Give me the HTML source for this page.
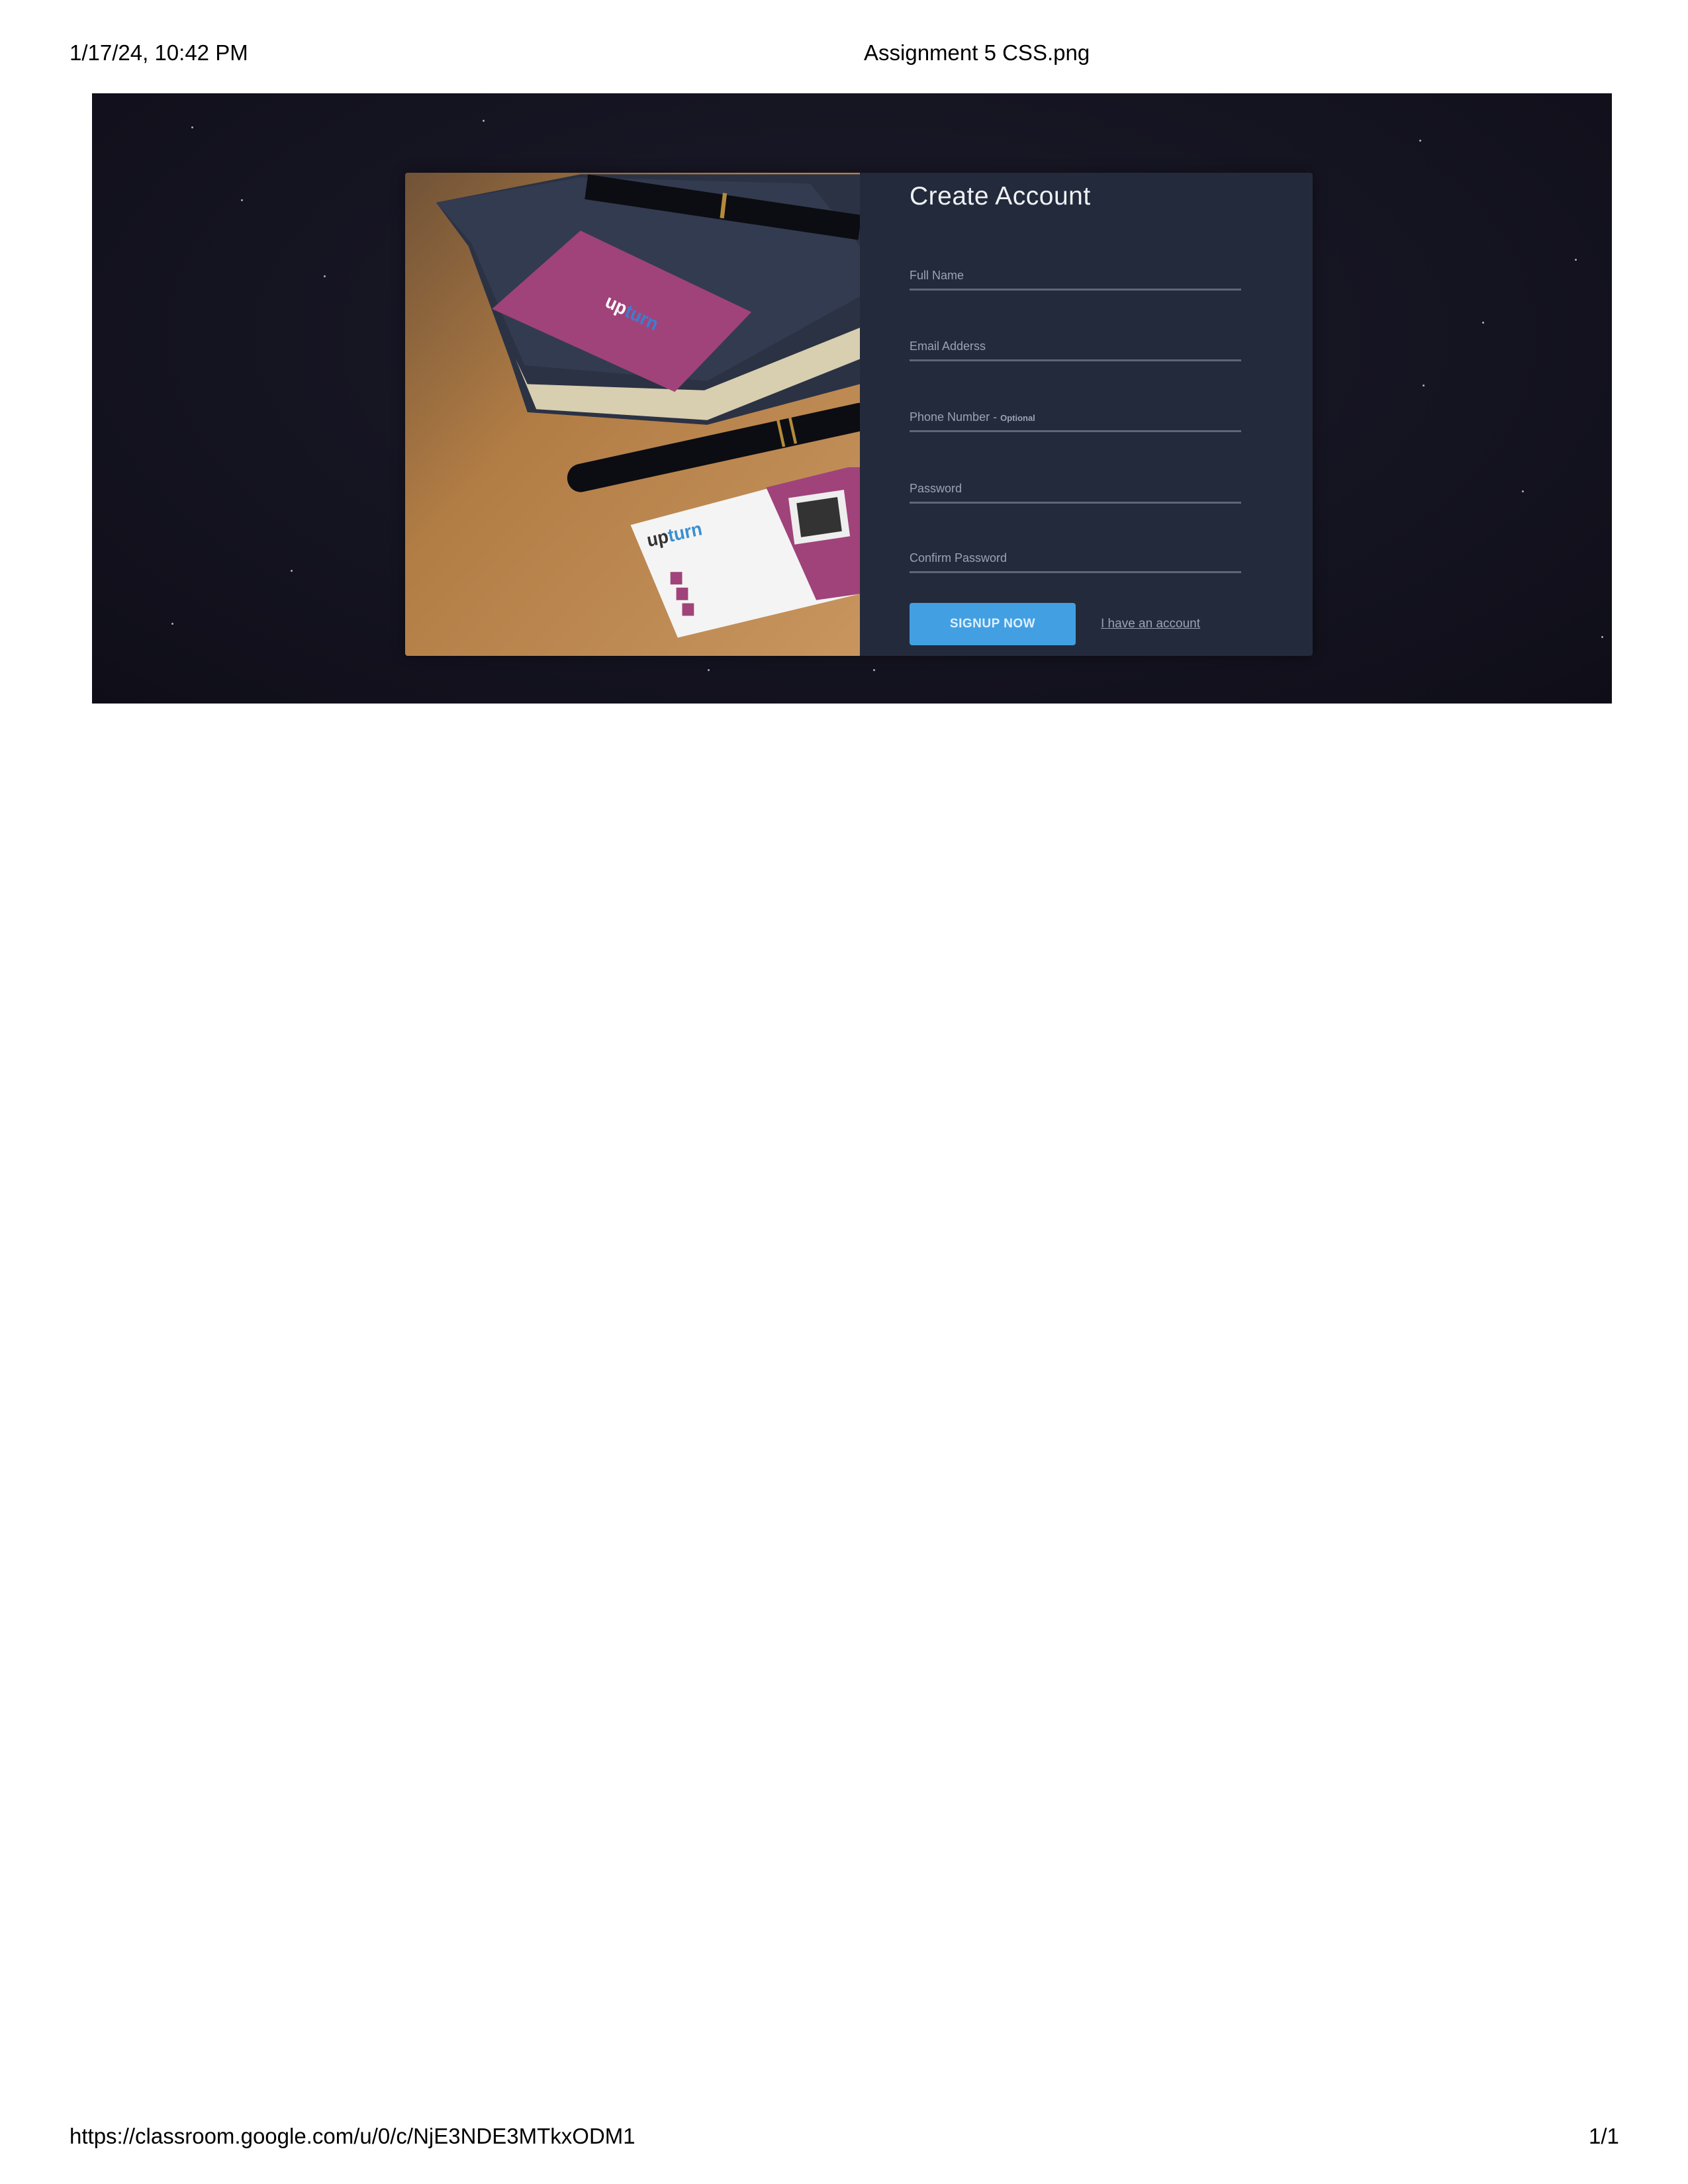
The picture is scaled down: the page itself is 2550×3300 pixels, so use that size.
<!DOCTYPE html>
<html><head><meta charset="utf-8"><style>
html,body{margin:0;padding:0;background:#fff;}
body{width:2550px;height:3300px;position:relative;overflow:hidden;font-family:"Liberation Sans",Arial,sans-serif;}
.t{position:absolute;font-size:33px;color:#000;white-space:nowrap;line-height:1;}
#bg{position:absolute;left:139px;top:141px;width:2296px;height:922px;background:radial-gradient(ellipse at 50% 40%,#1c1b2a 0%,#141320 60%,#0f0e18 100%);overflow:hidden;}
.star{position:absolute;width:3px;height:3px;border-radius:50%;background:#cfd3ff;opacity:.8}
#card{position:absolute;left:612px;top:261px;width:1371px;height:730px;border-radius:4px;overflow:hidden;background:#232a3b;box-shadow:0 0 20px rgba(0,0,0,.4);}
#img{position:absolute;left:0;top:0;width:687px;height:730px;}
.h{position:absolute;left:762px;top:14px;font-size:39px;color:#eef0f4;letter-spacing:0.5px;}
.lab{position:absolute;left:762px;font-size:18px;color:#9aa3b3;}
.lab small{font-size:13px;font-weight:bold}
.ln{position:absolute;left:762px;width:501px;height:3px;background:#5f6677;}
.btn{position:absolute;left:762px;top:650px;width:251px;height:64px;background:#42a0e2;border-radius:4px;color:#dfefff;font-weight:bold;font-size:19px;text-align:center;line-height:64px;letter-spacing:0.5px;}
.lnk{position:absolute;left:1051px;top:671px;font-size:19px;color:#9aa3b3;text-decoration:underline;}
</style></head><body>
<div class="t" style="left:105px;top:63px">1/17/24, 10:42 PM</div>
<div class="t" style="left:1305px;top:63px">Assignment 5 CSS.png</div>
<div id="bg">
<div class="star" style="left:150px;top:50px"></div>
<div class="star" style="left:225px;top:160px"></div>
<div class="star" style="left:350px;top:275px"></div>
<div class="star" style="left:590px;top:40px"></div>
<div class="star" style="left:835px;top:120px"></div>
<div class="star" style="left:2005px;top:70px"></div>
<div class="star" style="left:2100px;top:345px"></div>
<div class="star" style="left:2240px;top:250px"></div>
<div class="star" style="left:2160px;top:600px"></div>
<div class="star" style="left:2010px;top:440px"></div>
<div class="star" style="left:300px;top:720px"></div>
<div class="star" style="left:1180px;top:870px"></div>
<div class="star" style="left:930px;top:870px"></div>
<div class="star" style="left:120px;top:800px"></div>
<div class="star" style="left:2280px;top:820px"></div>
</div>
<div id="card">
<svg id="img" viewBox="25 25 1543 1543" preserveAspectRatio="none" xmlns="http://www.w3.org/2000/svg">
<defs><linearGradient id="w" x1="0" y1="0" x2="1" y2="1"><stop offset="0" stop-color="#6e5136"/><stop offset=".4" stop-color="#b27d45"/><stop offset="1" stop-color="#c99660"/></linearGradient></defs>
<rect x="0" y="0" width="1600" height="1600" fill="url(#w)"/>
<polygon points="130,120 620,30 1568,30 1568,700 1050,830 440,790 380,620 240,260" fill="#2b3244"/>
<polygon points="400,620 470,780 1050,815 1568,620 1568,520 1040,720 440,700" fill="#d8ceb0"/>
<polygon points="130,120 620,40 1400,60 1568,260 1568,420 1050,690 430,640 250,250" fill="#333b50"/>
<line x1="640" y1="70" x2="1568" y2="200" stroke="#0c0d12" stroke-width="80"/>
<line x1="1110" y1="90" x2="1100" y2="170" stroke="#b48a3a" stroke-width="14"/>
<polygon points="320,460 620,210 1200,470 940,725" fill="#a0437a"/>
<text x="700" y="450" font-family="Liberation Sans" font-size="60" font-weight="bold" fill="#fff" transform="rotate(25 700 450)">up<tspan fill="#3a7fd0">turn</tspan></text>
<line x1="620" y1="1000" x2="1568" y2="805" stroke="#0c0d12" stroke-width="90" stroke-linecap="round"/>
<line x1="1290" y1="815" x2="1310" y2="900" stroke="#b48a3a" stroke-width="10"/>
<line x1="1330" y1="805" x2="1350" y2="890" stroke="#b48a3a" stroke-width="10"/>
<polygon points="790,1150 1530,965 1568,965 1568,1370 950,1510" fill="#f4f4f4"/>
<polygon points="1250,1030 1530,965 1568,965 1568,1370 1420,1390" fill="#a0437a"/>
<rect x="1335" y="1050" width="190" height="150" fill="#eee" transform="rotate(-8 1430 1125)"/>
<rect x="1360" y="1070" width="140" height="110" fill="#333" transform="rotate(-8 1430 1125)"/>
<text x="850" y="1220" font-family="Liberation Sans" font-size="60" font-weight="bold" fill="#333" transform="rotate(-12 850 1220)">up<tspan fill="#3a8fd0">turn</tspan></text>
<rect x="925" y="1300" width="40" height="40" fill="#a0437a"/>
<rect x="945" y="1350" width="40" height="40" fill="#a0437a"/>
<rect x="965" y="1400" width="40" height="40" fill="#a0437a"/>
</svg>
<div class="h">Create Account</div>
<div class="lab" style="top:145px">Full Name</div><div class="ln" style="top:175px"></div>
<div class="lab" style="top:252px">Email Adderss</div><div class="ln" style="top:282px"></div>
<div class="lab" style="top:359px">Phone Number - <small>Optional</small></div><div class="ln" style="top:389px"></div>
<div class="lab" style="top:467px">Password</div><div class="ln" style="top:497px"></div>
<div class="lab" style="top:572px">Confirm Password</div><div class="ln" style="top:602px"></div>
<div class="btn">SIGNUP NOW</div>
<div class="lnk">I have an account</div>
</div>
<div class="t" style="left:105px;top:3211px">https://classroom.google.com/u/0/c/NjE3NDE3MTkxODM1</div>
<div class="t" style="left:2400px;top:3211px">1/1</div>
</body></html>
